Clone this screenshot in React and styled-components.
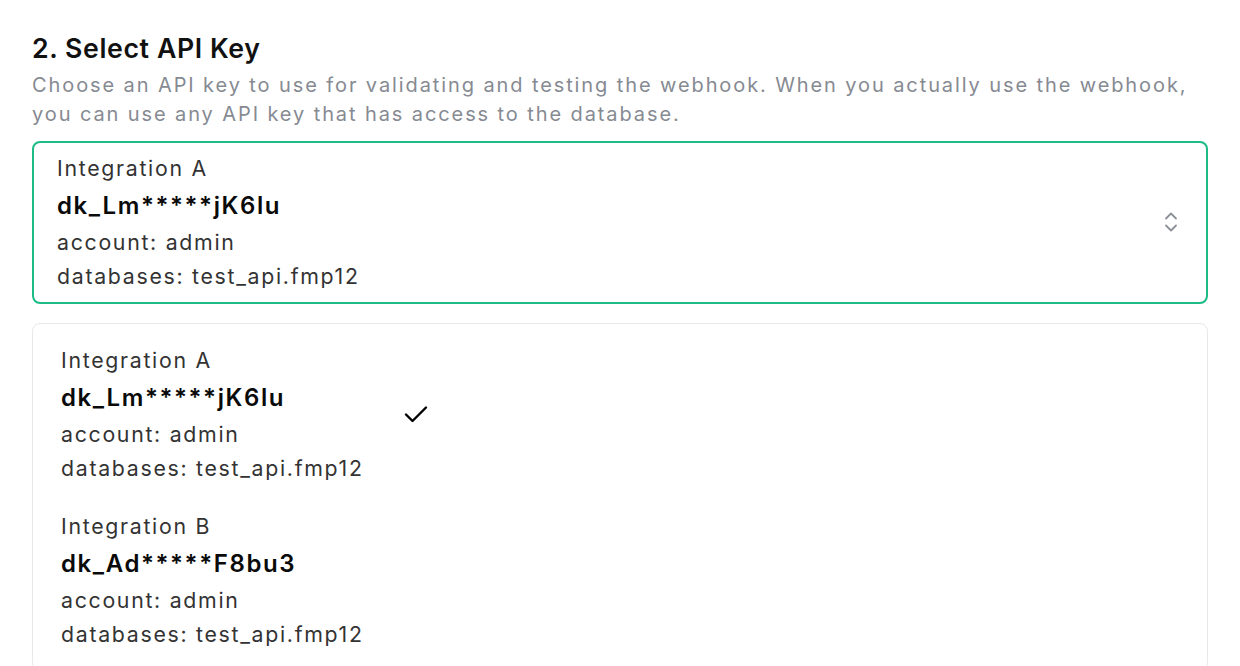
import React from "react";
import styled, { createGlobalStyle } from "styled-components";

const GlobalStyle = createGlobalStyle`
  body {
    margin: 0;
    background: #ffffff;
    font-family: Inter, "Noto Sans", sans-serif;
    -webkit-font-smoothing: antialiased;
  }
`;

const Page = styled.div`
  padding: 30px 32px 0;
  height: 666px;
  box-sizing: border-box;
  overflow: hidden;
`;

const Heading = styled.h2`
  margin: 0;
  font-size: 26.7px;
  line-height: 36px;
  font-weight: 600;
  letter-spacing: 0.6px;
  color: #111111;
`;

const Description = styled.p`
  margin: 5px 0 0;
  font-size: 20px;
  line-height: 29px;
  letter-spacing: 1.9px;
  color: #868a92;
`;

const SelectBox = styled.div`
  margin-top: 12px;
  display: flex;
  align-items: center;
  justify-content: space-between;
  border: 2px solid #1dbb87;
  border-radius: 8px;
  padding: 8px 27px 9px 23px;
  height: 163px;
  box-sizing: border-box;
`;

const KeyInfo = styled.div`
  display: flex;
  flex-direction: column;
`;

const Label = styled.div`
  font-size: 21.3px;
  line-height: 34px;
  letter-spacing: 1.7px;
  color: #333333;
`;

const KeyName = styled.div`
  padding-top: 2px;
  font-size: 24px;
  line-height: 38px;
  font-weight: 600;
  letter-spacing: 1.6px;
  color: #0a0a0a;
`;

const Meta = styled.div`
  font-size: 21.3px;
  line-height: 34px;
  letter-spacing: 1.7px;
  color: #333333;
`;

const Dropdown = styled.ul`
  list-style: none;
  margin: 19px 0 0;
  padding: 7px 0;
  border: 1px solid #e6e8eb;
  border-radius: 8px;
`;

const Option = styled.li`
  display: flex;
  align-items: center;
  gap: 40px;
  padding: 12px 28px;
`;

const UpDownIcon = () => (
  <svg width="16" height="24" viewBox="0 0 16 24" fill="none" stroke="#8b9097" strokeWidth="1.8" strokeLinecap="round" strokeLinejoin="round">
    <path d="M3 8.5l5-5 5 5" />
    <path d="M3 15.5l5 5 5-5" />
  </svg>
);

const CheckIcon = () => (
  <svg width="24" height="18" viewBox="0 0 24 18" fill="none" stroke="#000000" strokeWidth="2.4" strokeLinecap="round" strokeLinejoin="round">
    <path d="M2 9.5l6.5 6.5L22 2.5" />
  </svg>
);

const keys = [
  { label: "Integration A", name: "dk_Lm*****jK6lu", account: "admin", db: "test_api.fmp12" },
  { label: "Integration B", name: "dk_Ad*****F8bu3", account: "admin", db: "test_api.fmp12" },
];

const KeyDetails = ({ item }) => (
  <KeyInfo>
    <Label>{item.label}</Label>
    <KeyName>{item.name}</KeyName>
    <Meta>account: {item.account}</Meta>
    <Meta>databases: {item.db}</Meta>
  </KeyInfo>
);

const App = () => {
  const selected = keys[0];
  return (
    <Page>
      <GlobalStyle />
      <Heading>2. Select API Key</Heading>
      <Description>
        Choose an API key to use for validating and testing the webhook. When you actually use the webhook,
        you can use any API key that has access to the database.
      </Description>
      <SelectBox>
        <KeyDetails item={selected} />
        <UpDownIcon />
      </SelectBox>
      <Dropdown>
        {keys.map((k) => (
          <Option key={k.name}>
            <KeyDetails item={k} />
            {k.name === selected.name && <CheckIcon />}
          </Option>
        ))}
      </Dropdown>
    </Page>
  );
};

export default App;
